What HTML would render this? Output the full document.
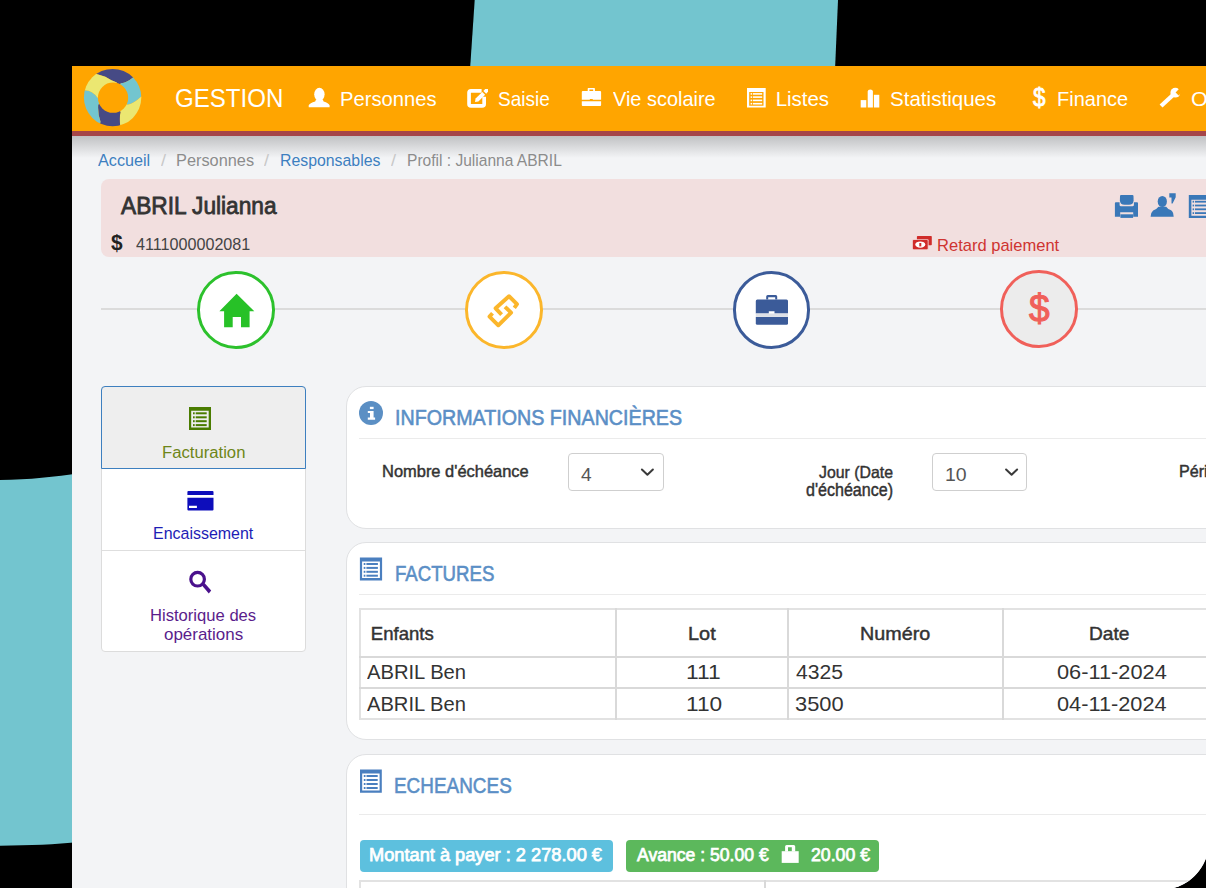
<!DOCTYPE html>
<html><head><meta charset="utf-8">
<style>
*{box-sizing:border-box;margin:0;padding:0}
html,body{width:1206px;height:888px;overflow:hidden;background:#000;font-family:"Liberation Sans",sans-serif}
.abs{position:absolute}
.t{position:absolute;white-space:nowrap;line-height:1;transform-origin:0 0}
#win{position:absolute;left:72px;top:66px;width:1136.5px;height:824.3px;background:#f3f4f6;border-bottom-right-radius:48.5px;overflow:hidden}
#in{position:absolute;left:-72px;top:-66px;width:1300px;height:960px}
svg.full{position:absolute;left:0;top:0}
</style></head><body>
<svg class="full" width="1206" height="888">
  <polygon points="474.7,0 838,0 835,70 470,70" fill="#73c5cf"/>
  <path d="M0,480 C30,479.6 55,477 80,473 L80,842 C55,844.5 30,845.3 0,845.7 Z" fill="#73c5cf"/>
</svg>
<div id="win"><div id="in">
  <div class="abs" style="left:72px;top:66px;width:1200px;height:65px;background:#ffa500"></div>
  <div class="abs" style="left:72px;top:131px;width:1200px;height:5px;background:#a54548"></div>
  <div class="abs" style="left:72px;top:136px;width:1200px;height:22px;background:linear-gradient(#c0c1c3,#f3f4f6)"></div>

  <!-- pink profile box -->
  <div class="abs" style="left:101px;top:179px;width:1150px;height:77.5px;background:#f2dfdf;border-radius:8px"></div>
  <!-- steps line -->
  <div class="abs" style="left:101px;top:308px;width:1150px;height:2px;background:#dbdbdb"></div>
  <div class="abs" style="left:196.9px;top:271.3px;width:77.7px;height:77.7px;border:3.1px solid #2cc12c;border-radius:50%;background:#fff"></div>
  <div class="abs" style="left:465px;top:271.4px;width:77.7px;height:77.7px;border:3.1px solid #fbb62b;border-radius:50%;background:#fff"></div>
  <div class="abs" style="left:732.6px;top:271.4px;width:77.7px;height:77.7px;border:3.1px solid #3b5b99;border-radius:50%;background:#fff"></div>
  <div class="abs" style="left:1000.3px;top:270.1px;width:77.7px;height:77.7px;border:3.1px solid #f0605a;border-radius:50%;background:#ececec"></div>
  <!-- sidebar -->
  <div class="abs" style="left:101.4px;top:386.4px;width:204.3px;height:265.8px;background:#fff;border:1px solid #dcdcdc;border-radius:4px"></div>
  <div class="abs" style="left:101.4px;top:386.4px;width:204.3px;height:83px;background:#eeeeee;border:1px solid #3d7fbf;border-radius:4px 4px 0 0"></div>
  <div class="abs" style="left:102.4px;top:550px;width:202.3px;height:1px;background:#dedede"></div>
  <!-- cards -->
  <div class="abs" style="left:345.5px;top:386px;width:1000px;height:143px;background:#fff;border:1px solid #e0e1e3;border-radius:20px"></div>
  <div class="abs" style="left:359.3px;top:438px;width:900px;height:1px;background:#ebebeb"></div>
  <div class="abs" style="left:567.8px;top:452.5px;width:95.8px;height:38.3px;border:1px solid #cfcfcf;border-radius:4px;background:#fff"></div>
  <div class="abs" style="left:932px;top:453px;width:95px;height:37.8px;border:1px solid #cfcfcf;border-radius:4px;background:#fff"></div>

  <div class="abs" style="left:345.5px;top:542.3px;width:1000px;height:197.5px;background:#fff;border:1px solid #e0e1e3;border-radius:20px"></div>
  <div class="abs" style="left:359.3px;top:594px;width:900px;height:1px;background:#ebebeb"></div>
  <!-- factures table -->
  <div class="abs" style="left:359px;top:608px;width:900px;height:112px;border:2px solid #e2e2e2"></div>
  <div class="abs" style="left:359px;top:656px;width:900px;height:2px;background:#d9d9d9"></div>
  <div class="abs" style="left:359px;top:687px;width:900px;height:2px;background:#d9d9d9"></div>
  <div class="abs" style="left:615px;top:608px;width:2px;height:112px;background:#d9d9d9"></div>
  <div class="abs" style="left:787px;top:608px;width:2px;height:112px;background:#d9d9d9"></div>
  <div class="abs" style="left:1002px;top:608px;width:2px;height:112px;background:#d9d9d9"></div>

  <div class="abs" style="left:345.5px;top:754px;width:1000px;height:300px;background:#fff;border:1px solid #e0e1e3;border-radius:20px"></div>
  <div class="abs" style="left:359.3px;top:814px;width:900px;height:1px;background:#ebebeb"></div>
  <div class="abs" style="left:359.5px;top:839.9px;width:253.4px;height:32px;background:#5dc0de;border-radius:4px"></div>
  <div class="abs" style="left:626.1px;top:839.9px;width:253px;height:32px;background:#5cb85c;border-radius:4px"></div>
  <div class="abs" style="left:359px;top:880px;width:900px;height:100px;border:2px solid #e2e2e2"></div>
  <div class="abs" style="left:764px;top:880px;width:2px;height:100px;background:#d9d9d9"></div>

<svg class="full" width="1300" height="960">
  <!-- logo -->
  <defs>
    <clipPath id="ring"><circle cx="112.6" cy="97.6" r="28.7"/></clipPath>
  </defs>
  <g clip-path="url(#ring)">
<path d="M112.8,97.6 L116.8,82.5 L111.40,80.20 L105.30,76.80 L96.50,74.10 L91.94,67.53 L84.30,56.52 L117.33,47.81 L148.24,62.33 L138.67,71.86 L133,77.5 Q126.90,82.65 120.80,83.20 Z" fill="#464a85"/>
<path d="M112.8,97.6 L120.8,83.2 Q126.90,82.65 133.00,77.50 L138.67,71.86 L148.24,62.33 L158.60,77.55 L162.76,95.49 L149.19,96.06 L141.2,96.4 Q134.40,103.00 127.60,104.80 Z" fill="#73c5cf"/>
<path d="M112.8,97.6 L127.6,104.8 Q134.40,103.00 141.20,96.40 L149.19,96.06 L162.76,95.49 L152.99,127.35 L125.37,146.00 L122.21,133.84 L120.2,126.1 Q119.25,117.00 120.50,111.90 Z" fill="#ebe771"/>
<path d="M112.8,97.6 L120.5,111.9 Q119.25,117.00 120.20,126.10 L122.21,133.84 L125.37,146.00 L107.57,147.33 L90.44,142.32 L97.02,129.16 L100.6,122 Q97.60,114.75 98.20,104.50 Z" fill="#464a85"/>
<path d="M112.8,97.6 L98.2,104.5 Q97.60,114.75 100.60,122.00 L97.02,129.16 L90.44,142.32 L67.25,118.22 L64.44,84.90 L77.26,88.27 L85,90.3 Q92.35,90.60 97.50,97.70 Z" fill="#73c5cf"/>
<path d="M112.8,97.6 L97.5,97.7 Q92.35,90.60 85.00,90.30 L77.26,88.27 L64.44,84.90 L71.83,68.93 L84.30,56.52 L91.94,67.53 L96.5,74.1 L105.30,76.80 L111.40,80.20 L116.80,82.50 Z" fill="#ebe771"/>
  </g>
  <circle cx="113.05" cy="97.7" r="15.1" fill="#ffa500"/>
  <!-- nav icons -->
  <g fill="#fff">
    <!-- user -->
    <ellipse cx="319.4" cy="94.3" rx="5.2" ry="6.5"/>
    <path d="M316,99.5 L322.8,99.5 L323.6,101.4 Q328.6,102.8 329.6,105.3 L329.6,107.3 L308.7,107.3 L308.7,105.3 Q309.8,102.8 315.2,101.4Z"/>
    <!-- edit -->
    <path d="M481.6,90.85 L471,90.85 Q469.05,90.85 469.05,92.8 L469.05,103.9 Q469.05,105.85 471,105.85 L482.2,105.85 Q484.15,105.85 484.15,103.9 L484.15,96.8" stroke="#fff" stroke-width="3.7" fill="none"/>
    <path d="M475,102 L475.6,98.6 L482.3,92 L485.1,94.8 L478.4,101.4Z"/>
    <path d="M483.4,90.9 L485.2,89.1 L488,89.1 L488,91.8 L486.2,93.7Z"/>
    <!-- briefcase -->
    <path d="M587.7,91.1 L587.7,88.6 Q587.7,87.9 588.4,87.9 L594.2,87.9 Q594.9,87.9 594.9,88.6 L594.9,91.1 L593.2,91.1 L593.2,89.6 L589.4,89.6 L589.4,91.1Z"/>
    <path d="M582.8,91.1 L600.1,91.1 Q601.1,91.1 601.1,92.1 L601.1,99.8 L592.9,99.8 L592.6,98.9 L590,98.9 L589.7,99.8 L581.8,99.8 L581.8,92.1 Q581.8,91.1 582.8,91.1Z"/>
    <path d="M581.8,101.2 L601.1,101.2 L601.1,105 Q601.1,105.9 600.2,105.9 L582.7,105.9 Q581.8,105.9 581.8,105 Z"/>
    <!-- list-alt -->
    <path fill-rule="evenodd" d="M747,87.9 L765.7,87.9 L765.7,107.5 L747,107.5Z M749.2,91.9 L749.2,105.8 L763.5,105.8 L763.5,91.9Z"/>
    <rect x="750.6" y="93.1" width="1.4" height="1.6"/><rect x="752.8" y="93.1" width="9.4" height="1.6"/>
    <rect x="750.6" y="96.3" width="1.4" height="1.6"/><rect x="752.8" y="96.3" width="9.4" height="1.6"/>
    <rect x="750.6" y="99.6" width="1.4" height="1.6"/><rect x="752.8" y="99.6" width="9.4" height="1.6"/>
    <rect x="750.6" y="102.9" width="1.4" height="1.6"/><rect x="752.8" y="102.9" width="9.4" height="1.6"/>
    <!-- stats -->
    <rect x="860.7" y="100.1" width="5.6" height="7.4"/>
    <path d="M867.7,107.5 L867.7,91.4 Q867.7,89.4 870.3,89.4 Q872.9,89.4 872.9,91.4 L872.9,107.5Z"/>
    <rect x="873.9" y="94.8" width="5.4" height="12.7"/>
    <!-- wrench -->
    <path d="M1159.6,104.6 L1171,94 L1173.9,96.9 L1162.5,107.5 Z"/>
    <circle cx="1175.3" cy="92.7" r="4.9"/>
    <path d="M1175.6,92.4 L1179.4,88.6 L1182.5,91.7 L1178.7,95.5 Z" fill="#ffa500"/>
  </g>
</svg>
<div class="t" style="left:1033.2px;top:84.6px;font-size:25.5px;font-weight:400;-webkit-text-stroke:0.8px #fff;color:#fff;transform:scaleX(0.88)">$</div>

<svg class="full" width="1300" height="960">
  <!-- profile icons -->
  <g fill="#3a78b8">
    <path d="M1121,195 L1132.5,195 Q1133.4,195 1133.5,196 L1133.6,200.5 Q1133.4,204.7 1129,204.7 L1124.5,204.7 Q1120.1,204.7 1119.9,200.5 L1120,196 Q1120.1,195 1121,195Z"/>
    <path d="M1114.9,203.2 Q1114.9,202.2 1115.9,202.2 L1119.6,202.2 L1119.6,205 Q1119.6,206.2 1121,206.2 L1132.5,206.2 Q1133.9,206.2 1133.9,205 L1133.9,202.2 L1137,202.2 Q1138,202.2 1138,203.2 L1138,216.7 L1133.2,216.7 L1133.2,212.3 L1120.2,212.3 L1120.2,216.7 L1114.9,216.7Z"/>
    <rect x="1120.4" y="214.3" width="12.7" height="3.6"/>
    <ellipse cx="1162.3" cy="201.5" rx="4.6" ry="5.6"/>
    <path d="M1150.6,216.7 L1151.3,213 Q1152.5,210.2 1156.2,209 L1158.5,206.8 L1166.2,206.8 L1168.3,209 Q1172.2,210.2 1173.1,213 L1173.7,216.7Z"/>
    <path d="M1169.3,193.2 L1175.7,193.2 L1175.7,197.2 L1172.6,203.5 L1171.5,203.5 L1171.5,197.4 L1169.3,197.4Z"/>
    <path fill-rule="evenodd" d="M1188.8,195 L1215,195 L1215,217.9 L1188.8,217.9Z M1191.4,199.7 L1191.4,215.8 L1215,215.8 L1215,199.7Z"/>
    <rect x="1192.6" y="200.8" width="1.5" height="1.8"/><rect x="1195" y="200.8" width="20" height="1.8"/>
    <rect x="1192.6" y="204.6" width="1.5" height="1.8"/><rect x="1195" y="204.6" width="20" height="1.8"/>
    <rect x="1192.6" y="208.4" width="1.5" height="1.8"/><rect x="1195" y="208.4" width="20" height="1.8"/>
    <rect x="1192.6" y="212.2" width="1.5" height="1.8"/><rect x="1195" y="212.2" width="20" height="1.8"/>
  </g>
  <!-- money icon -->
  <g fill="#d02c2a">
    <rect x="916.9" y="236" width="14.9" height="9.2" rx="0.8"/>
        <rect x="912.4" y="239.3" width="16.2" height="10.5" rx="1" fill="#f0c8c8"/>
    <rect x="912.9" y="240" width="14.8" height="9.3" rx="0.8"/>
    <ellipse cx="920.3" cy="244.6" rx="5" ry="3.2" fill="#fff"/>
    <rect x="919.3" y="243" width="2" height="3.4" fill="#d02c2a"/>
  </g>
  <!-- step icons -->
  <path d="M236.6,293.8 L254.3,311.2 L249.6,311.2 L249.6,327.3 L241,327.3 L241,316.9 L232.7,316.9 L232.7,327.3 L224.1,327.3 L224.1,311.2 L219.4,311.2Z" fill="#27c127"/>
  <g fill="none" stroke="#fbb62b" stroke-width="3.9" stroke-linecap="butt" stroke-linejoin="round">
    <path d="M514.3,307.9 L517,304.2 L509,296.2 L495.6,308.3 L501.6,314.6"/>
    <path d="M505,306.8 L511.1,312.6 L498.3,325.3 L489.5,316.6 L492.5,313.3"/>
  </g>
  <g fill="#3b5b99">
    <path fill-rule="evenodd" d="M766.2,299.6 L766.2,296.6 Q766.2,295.1 767.7,295.1 L775.7,295.1 Q777.2,295.1 777.2,296.6 L777.2,299.6 L775.2,299.6 L775.2,297.3 L768.2,297.3 L768.2,299.6Z"/>
    <path d="M757.3,299.6 L786.5,299.6 Q788,299.6 788,301.1 L788,313.5 L774.5,313.5 L774.5,311.2 L768.8,311.2 L768.8,313.5 L755.8,313.5 L755.8,301.1 Q755.8,299.6 757.3,299.6Z"/>
    <rect x="755.8" y="313.5" width="32.2" height="3.4" fill="#dde0e6"/>
    <path d="M755.8,316.9 L788,316.9 L788,323.3 Q788,324.8 786.5,324.8 L757.3,324.8 Q755.8,324.8 755.8,323.3Z"/>
  </g>
  <!-- sidebar icons -->
  <g fill="#4a7c00">
    <path fill-rule="evenodd" d="M189,406.9 L211,406.9 L211,429.9 L189,429.9Z M191.2,410.8 L191.2,427.6 L208.7,427.6 L208.7,410.8Z"/>
    <rect x="193" y="412.3" width="1.7" height="2"/><rect x="195.7" y="412.3" width="11" height="2"/>
    <rect x="193" y="416.3" width="1.7" height="2"/><rect x="195.7" y="416.3" width="11" height="2"/>
    <rect x="193" y="420.2" width="1.7" height="2"/><rect x="195.7" y="420.2" width="11" height="2"/>
    <rect x="193" y="424.1" width="1.7" height="2"/><rect x="195.7" y="424.1" width="11" height="2"/>
  </g>
  <g fill="#0d0dbb">
    <path d="M188.4,491 L212.5,491 Q213.5,491 213.5,492 L213.5,494.9 L187.4,494.9 L187.4,492 Q187.4,491 188.4,491Z"/>
    <path fill-rule="evenodd" d="M187.4,497.8 L213.5,497.8 L213.5,509.6 Q213.5,510.6 212.5,510.6 L188.4,510.6 Q187.4,510.6 187.4,509.6Z M189,505.7 L189,507.9 L196.9,507.9 L196.9,505.7Z"/>
  </g>
  <g fill="none" stroke="#4a118c" stroke-width="3.2">
    <circle cx="197.6" cy="579.2" r="6.8"/>
  </g>
  <path d="M202,585.5 L204.5,583 L211.2,590.5 L208.8,593.5Z" fill="#4a118c"/>
  <!-- card icons -->
  <circle cx="371" cy="413.1" r="12" fill="#5b8fc4"/>
  <g fill="#fff">
    <rect x="369.9" y="406.8" width="3.7" height="2.3"/>
    <path d="M367.8,411 L373.6,411 L373.6,417.4 L375.1,417.4 L375.1,419.8 L367.8,419.8 L367.8,417.4 L370,417.4 L370,413 L367.8,413Z"/>
  </g>
  <g fill="#4a7fbf">
    <path fill-rule="evenodd" d="M359.9,557.6 L382.1,557.6 L382.1,580.4 L359.9,580.4Z M362.1,561.5 L362.1,578.1 L379.9,578.1 L379.9,561.5Z"/>
    <rect x="363.7" y="563" width="1.7" height="2"/><rect x="366.4" y="563" width="11.5" height="2"/>
    <rect x="363.7" y="566.9" width="1.7" height="2"/><rect x="366.4" y="566.9" width="11.5" height="2"/>
    <rect x="363.7" y="570.8" width="1.7" height="2"/><rect x="366.4" y="570.8" width="11.5" height="2"/>
    <rect x="363.7" y="574.7" width="1.7" height="2"/><rect x="366.4" y="574.7" width="11.5" height="2"/>
    <path fill-rule="evenodd" d="M360,769.4 L381.8,769.4 L381.8,792.8 L360,792.8Z M362.2,773.4 L362.2,790.5 L379.6,790.5 L379.6,773.4Z"/>
    <rect x="363.8" y="775" width="1.7" height="2"/><rect x="366.5" y="775" width="11.2" height="2"/>
    <rect x="363.8" y="779" width="1.7" height="2"/><rect x="366.5" y="779" width="11.2" height="2"/>
    <rect x="363.8" y="783" width="1.7" height="2"/><rect x="366.5" y="783" width="11.2" height="2"/>
    <rect x="363.8" y="787" width="1.7" height="2"/><rect x="366.5" y="787" width="11.2" height="2"/>
  </g>
  <!-- select chevrons -->
  <g fill="none" stroke="#3a3a3a" stroke-width="2" stroke-linecap="round" stroke-linejoin="round">
    <path d="M641.9,469.5 L647.4,474.8 L652.9,469.5"/>
    <path d="M1006.1,469.5 L1011.6,474.8 L1017.1,469.5"/>
  </g>
  <!-- lock -->
  <g fill="#fff">
    <path fill-rule="evenodd" d="M785.1,851.5 L785.1,846.5 Q785.1,845 786.6,845 L793.7,845 Q795.2,845 795.2,846.5 L795.2,851.5Z M788,851.5 L788,847.3 L791.8,847.3 L791.8,851.5Z"/>
    <rect x="781.7" y="851.2" width="17" height="11.7"/>
  </g>
</svg>
<div class="t" style="left:1029px;top:289px;font-size:39px;font-weight:400;-webkit-text-stroke:1.1px #f0605a;color:#f0605a;transform:scaleX(0.95)">$</div>
<div class='t' style='left:175.07px;top:86px;font-size:25.80px;font-weight:400;color:#ffffff;transform:scaleX(0.9327);'>GESTION</div>
<div class='t' style='left:340.02px;top:89px;font-size:20.43px;font-weight:400;color:#ffffff;transform:scaleX(0.9895);'>Personnes</div>
<div class='t' style='left:498.07px;top:89px;font-size:20.43px;font-weight:400;color:#ffffff;transform:scaleX(0.9315);'>Saisie</div>
<div class='t' style='left:612.80px;top:89px;font-size:20.43px;font-weight:400;color:#ffffff;transform:scaleX(0.9760);'>Vie scolaire</div>
<div class='t' style='left:775.70px;top:89px;font-size:20.43px;font-weight:400;color:#ffffff;transform:scaleX(1.0000);'>Listes</div>
<div class='t' style='left:890.29px;top:89px;font-size:20.43px;font-weight:400;color:#ffffff;transform:scaleX(1.0067);'>Statistiques</div>
<div class='t' style='left:1057.44px;top:89px;font-size:20.43px;font-weight:400;color:#ffffff;transform:scaleX(0.9786);'>Finance</div>
<div class='t' style='left:1191.32px;top:89px;font-size:20.00px;font-weight:400;color:#ffffff;transform:scaleX(1.0786);'>O</div>
<div class='t' style='left:98.30px;top:152px;font-size:17.10px;font-weight:400;color:#3d7fc0;transform:scaleX(0.9463);'>Accueil</div>
<div class='t' style='left:160.60px;top:152px;font-size:17.10px;font-weight:400;color:#c8c8c8;transform:scaleX(1.0600);'>/</div>
<div class='t' style='left:175.54px;top:152px;font-size:17.10px;font-weight:400;color:#8c8c8c;transform:scaleX(0.9550);'>Personnes</div>
<div class='t' style='left:263.60px;top:152px;font-size:17.10px;font-weight:400;color:#c8c8c8;transform:scaleX(1.0600);'>/</div>
<div class='t' style='left:279.57px;top:152px;font-size:17.10px;font-weight:400;color:#3d7fc0;transform:scaleX(0.9271);'>Responsables</div>
<div class='t' style='left:390.50px;top:152px;font-size:17.10px;font-weight:400;color:#c8c8c8;transform:scaleX(1.0600);'>/</div>
<div class='t' style='left:406.59px;top:152px;font-size:17.10px;font-weight:400;color:#8c8c8c;transform:scaleX(0.9101);'>Profil : Julianna ABRIL</div>
<div class='t' style='left:121.40px;top:195px;font-size:23.57px;font-weight:400;color:#333333;transform:scaleX(0.9630);-webkit-text-stroke:0.8px currentColor;'>ABRIL Julianna</div>
<div class='t' style='left:111.30px;top:232px;font-size:21.59px;font-weight:700;color:#222222;transform:scaleX(0.9667);'>$</div>
<div class='t' style='left:135.60px;top:237px;font-size:16.96px;font-weight:400;color:#444444;transform:scaleX(0.9529);'>4111000002081</div>
<div class='t' style='left:936.62px;top:238px;font-size:16.96px;font-weight:400;color:#cf3431;transform:scaleX(0.9758);'>Retard paiement</div>
<div class='t' style='left:161.83px;top:444px;font-size:17.25px;font-weight:400;color:#6e8618;transform:scaleX(0.9667);'>Facturation</div>
<div class='t' style='left:153.04px;top:526px;font-size:16.67px;font-weight:400;color:#1d1db5;transform:scaleX(0.9587);'>Encaissement</div>
<div class='t' style='left:150.30px;top:608px;font-size:16.67px;font-weight:400;color:#5a1d8c;transform:scaleX(0.9971);'>Historique des</div>
<div class='t' style='left:163.78px;top:627px;font-size:16.60px;font-weight:400;color:#5a1d8c;transform:scaleX(1.0211);'>opérations</div>
<div class='t' style='left:394.50px;top:407px;font-size:21.91px;font-weight:400;color:#5b8fc6;transform:scaleX(0.8981);-webkit-text-stroke:0.6px currentColor;'>INFORMATIONS FINANCIÈRES</div>
<div class='t' style='left:394.85px;top:563px;font-size:21.91px;font-weight:400;color:#5b8fc6;transform:scaleX(0.8504);-webkit-text-stroke:0.6px currentColor;'>FACTURES</div>
<div class='t' style='left:394.37px;top:774px;font-size:22.93px;font-weight:400;color:#5b8fc6;transform:scaleX(0.8255);-webkit-text-stroke:0.6px currentColor;'>ECHEANCES</div>
<div class='t' style='left:382.20px;top:464px;font-size:16.54px;font-weight:400;color:#333333;transform:scaleX(0.9952);-webkit-text-stroke:0.45px currentColor;'>Nombre d'échéance</div>
<div class='t' style='left:581.00px;top:465px;font-size:19.13px;font-weight:400;color:#555555;transform:scaleX(1.0000);'>4</div>
<div class='t' style='left:819.20px;top:464px;font-size:17.12px;font-weight:400;color:#333333;transform:scaleX(0.9266);-webkit-text-stroke:0.45px currentColor;'>Jour (Date</div>
<div class='t' style='left:806.20px;top:482px;font-size:17.60px;font-weight:400;color:#333333;transform:scaleX(0.9137);-webkit-text-stroke:0.45px currentColor;'>d'échéance)</div>
<div class='t' style='left:944.58px;top:465px;font-size:19.13px;font-weight:400;color:#555555;transform:scaleX(1.0200);'>10</div>
<div class='t' style='left:1179.00px;top:463px;font-size:16.11px;font-weight:400;color:#333333;transform:scaleX(1.0000);-webkit-text-stroke:0.45px currentColor;'>Péri</div>
<div class='t' style='left:370.80px;top:625px;font-size:18.57px;font-weight:400;color:#333333;transform:scaleX(1.0000);-webkit-text-stroke:0.45px currentColor;'>Enfants</div>
<div class='t' style='left:688.43px;top:625px;font-size:18.57px;font-weight:400;color:#333333;transform:scaleX(1.0720);-webkit-text-stroke:0.45px currentColor;'>Lot</div>
<div class='t' style='left:860.14px;top:625px;font-size:18.57px;font-weight:400;color:#333333;transform:scaleX(1.0631);-webkit-text-stroke:0.45px currentColor;'>Numéro</div>
<div class='t' style='left:1088.67px;top:625px;font-size:18.57px;font-weight:400;color:#333333;transform:scaleX(1.0316);-webkit-text-stroke:0.45px currentColor;'>Date</div>
<div class='t' style='left:367.30px;top:662px;font-size:20.43px;font-weight:400;color:#333333;transform:scaleX(0.9879);'>ABRIL Ben</div>
<div class='t' style='left:367.30px;top:693px;font-size:21.01px;font-weight:400;color:#333333;transform:scaleX(0.9588);'>ABRIL Ben</div>
<div class='t' style='left:686.16px;top:662px;font-size:20.43px;font-weight:400;color:#333333;transform:scaleX(1.1179);'>111</div>
<div class='t' style='left:686.24px;top:693px;font-size:21.01px;font-weight:400;color:#333333;transform:scaleX(1.0806);'>110</div>
<div class='t' style='left:795.80px;top:662px;font-size:20.43px;font-weight:400;color:#333333;transform:scaleX(1.0356);'>4325</div>
<div class='t' style='left:794.76px;top:693px;font-size:21.01px;font-weight:400;color:#333333;transform:scaleX(1.0400);'>3500</div>
<div class='t' style='left:1057.03px;top:662px;font-size:20.43px;font-weight:400;color:#333333;transform:scaleX(1.0663);'>06-11-2024</div>
<div class='t' style='left:1057.06px;top:693px;font-size:21.01px;font-weight:400;color:#333333;transform:scaleX(1.0356);'>04-11-2024</div>
<div class='t' style='left:369.19px;top:846px;font-size:18.01px;font-weight:400;color:#ffffff;transform:scaleX(1.0122);-webkit-text-stroke:0.75px currentColor;'>Montant à payer : 2 278.00 €</div>
<div class='t' style='left:636.80px;top:846px;font-size:18.01px;font-weight:400;color:#ffffff;transform:scaleX(0.9770);-webkit-text-stroke:0.75px currentColor;'>Avance : 50.00 €</div>
<div class='t' style='left:811.00px;top:846px;font-size:18.01px;font-weight:400;color:#ffffff;transform:scaleX(0.9833);-webkit-text-stroke:0.75px currentColor;'>20.00 €</div>
</div></div>
</body></html>
